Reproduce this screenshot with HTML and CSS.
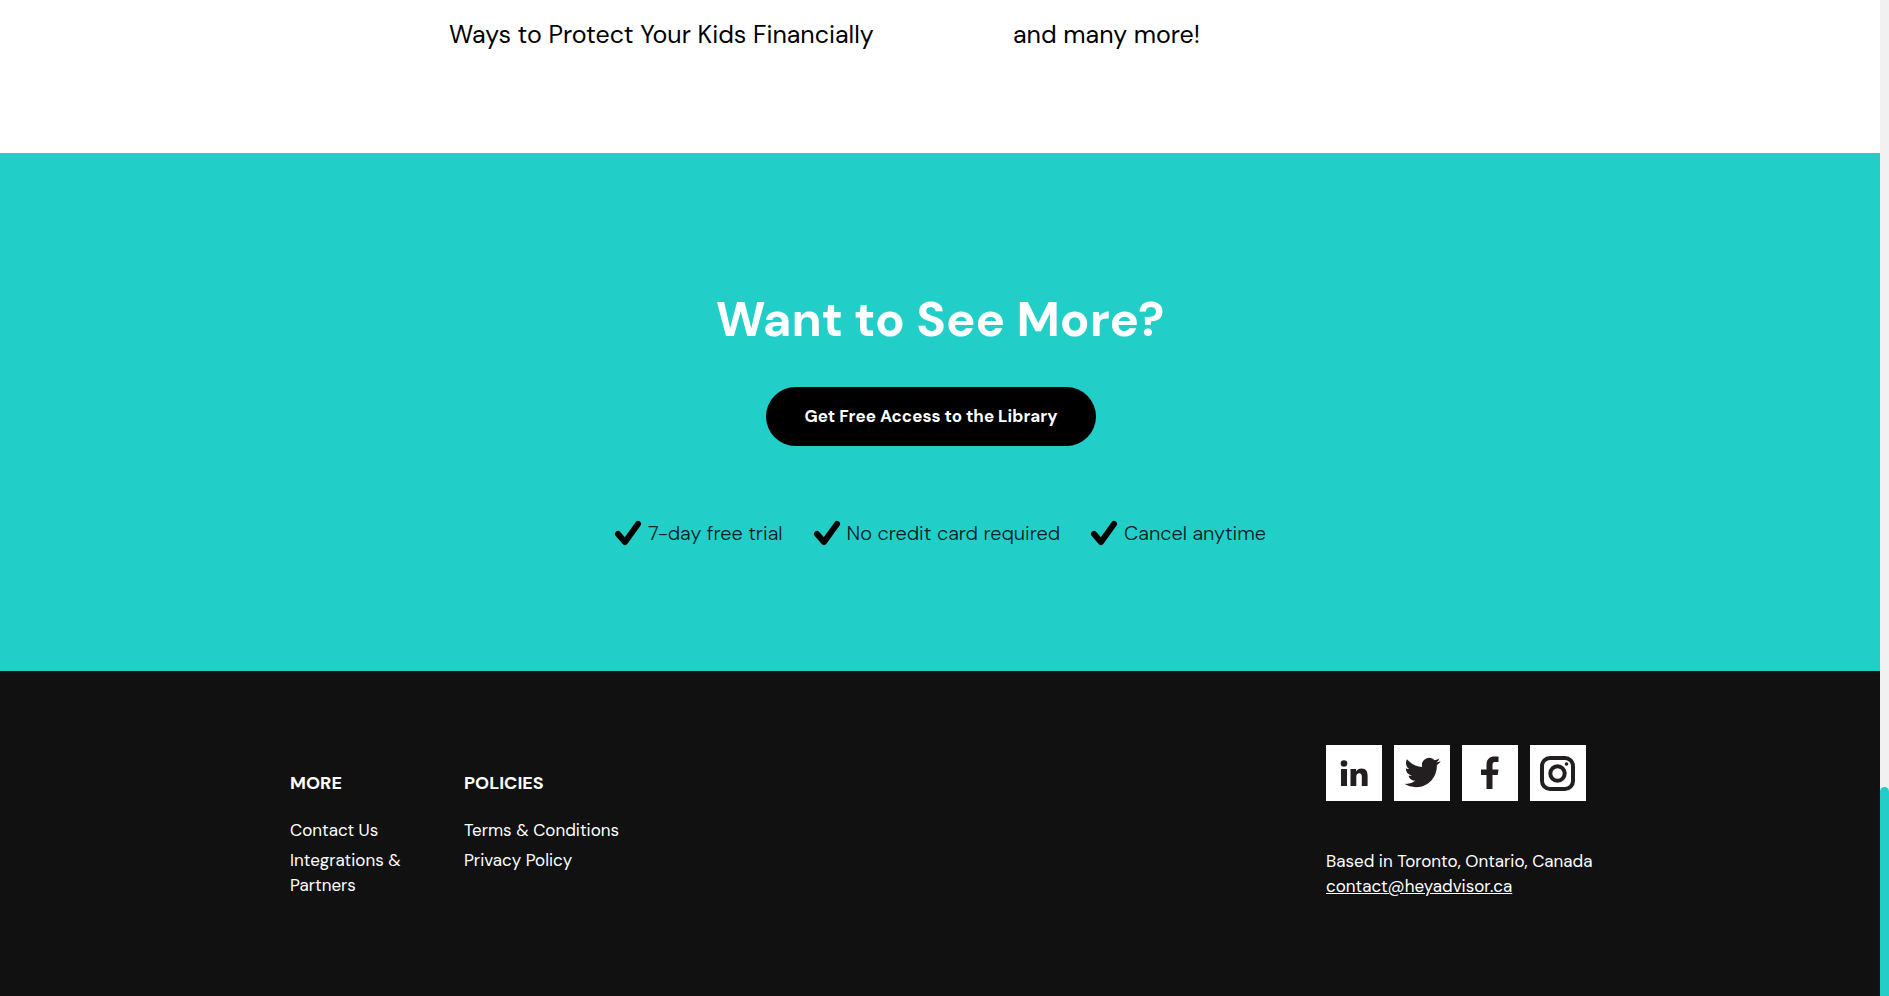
FILE: index.html
```html
<!DOCTYPE html>
<html lang="en">
<head>
  <meta charset="UTF-8" />
  <meta name="viewport" content="width=device-width, initial-scale=1" />
  <title>Hey Advisor</title>
  <link rel="stylesheet" href="styles.css">
</head>
<body>

<div class="page">
  <section class="topics">
    <ul class="topics-list">
      <li>Ways to Protect Your Kids Financially</li>
      <li>and many more!</li>
    </ul>
  </section>

  <section class="cta">
    <h2>Want to See More?</h2>
    <button type="button" class="cta-button">Get Free Access to the Library</button>
    <ul class="perks">
      <li>
        <svg viewBox="0 0 28 26" aria-hidden="true"><path d="M4 14l7 8L24 4" /></svg>
        <span>7-day free trial</span>
      </li>
      <li>
        <svg viewBox="0 0 28 26" aria-hidden="true"><path d="M4 14l7 8L24 4" /></svg>
        <span>No credit card required</span>
      </li>
      <li>
        <svg viewBox="0 0 28 26" aria-hidden="true"><path d="M4 14l7 8L24 4" /></svg>
        <span>Cancel anytime</span>
      </li>
    </ul>
  </section>

  <footer class="footer">
    <div class="footer-inner">
      <nav class="footer-links">
        <h3>MORE</h3>
        <a href="#contact">Contact Us</a>
        <a href="#partners">Integrations &amp; Partners</a>
      </nav>
      <nav class="footer-links">
        <h3>POLICIES</h3>
        <a href="#terms">Terms &amp; Conditions</a>
        <a href="#privacy">Privacy Policy</a>
      </nav>
      <div class="footer-contact">
        <div class="social">
          <a href="#linkedin" aria-label="LinkedIn">
            <svg viewBox="0 0 56 56">
              <circle cx="18" cy="18.500" r="3.300" />
              <path d="M15 24h6v17h-6zM24.500 24h5.600v2.400c1-1.700 2.900-2.900 5.500-2.900 4.300 0 6 2.800 6 7.200V41h-5.800v-9.200c0-2.200-.8-3.500-2.600-3.500-1.900 0-2.900 1.300-2.900 3.500V41h-5.800z" />
            </svg>
          </a>
          <a href="#twitter" aria-label="Twitter">
            <svg viewBox="0 0 56 56">
              <path transform="translate(10.500 9.500) scale(1.500)" d="M23.953 4.570a10 10 0 01-2.825.775 4.958 4.958 0 002.163-2.723c-.951.555-2.005.959-3.127 1.184a4.920 4.920 0 00-8.384 4.482C7.690 8.095 4.067 6.130 1.640 3.162a4.822 4.822 0 00-.666 2.475c0 1.710.87 3.213 2.188 4.096a4.904 4.904 0 01-2.228-.616v.06a4.923 4.923 0 003.946 4.827 4.996 4.996 0 01-2.212.085 4.936 4.936 0 004.604 3.417 9.867 9.867 0 01-6.102 2.105c-.39 0-.779-.023-1.170-.067a13.995 13.995 0 007.557 2.209c9.053 0 13.998-7.496 13.998-13.985 0-.21 0-.42-.015-.63A9.935 9.935 0 0024 4.590z" />
            </svg>
          </a>
          <a href="#facebook" aria-label="Facebook">
            <svg viewBox="0 0 56 56">
              <path d="M24.500 44V30H19v-5.500h5.500V20c0-5.500 3-8.500 8-8.500h4V17h-3c-2.300 0-3 1-3 3v4.500h6l-.8 5.500h-5.200v14z" />
            </svg>
          </a>
          <a href="#instagram" aria-label="Instagram">
            <svg viewBox="0 0 56 56" class="line">
              <rect x="12" y="13" width="31" height="31" rx="8" />
              <circle cx="27.500" cy="28.500" r="7.200" />
              <circle class="dot" cx="36.500" cy="19" r="1.800" />
            </svg>
          </a>
        </div>
        <p>Based in Toronto, Ontario, Canada</p>
        <a class="mail" href="mailto:contact@heyadvisor.ca">contact@heyadvisor.ca</a>
      </div>
    </div>
  </footer>
</div>

<div class="scroll-track">
  <div class="scroll-thumb"></div>
</div>

</body>
</html>
```
FILE: styles.css
```css
* {
  box-sizing: border-box;
}
body {
  font-family: "DM Sans", Inter, "Open Sans", sans-serif;
  margin: 0;
  min-height: 100vh;
  display: grid;
  grid-template-columns: 1fr 9px;
  background-color: #fff;
  color: #000;
}
ul {
  list-style: none;
  margin: 0;
  padding: 0;
}
h2, h3, p {
  margin: 0;
}
.page {
  display: flex;
  flex-direction: column;
}

.topics {
  padding: 17px 24px 100px;
}
.topics-list {
  display: grid;
  grid-template-columns: 564px 1fr;
  max-width: 982px;
  margin: 0 auto;
  font-size: 25px;
  line-height: 36px;
}

.cta {
  background-color: #22cfc8;
  display: flex;
  flex-direction: column;
  align-items: center;
  padding: 136px 24px 121px;
}
.cta h2 {
  color: #fff;
  font-size: 49px;
  line-height: 60px;
}
.cta-button {
  margin: 38px 18px 70px 0;
  padding: 0 38px 2px;
  height: 59px;
  border: 0;
  border-radius: 30px;
  background-color: #000;
  color: #fff;
  font-family: inherit;
  font-size: 17px;
  font-weight: 700;
  cursor: pointer;
}
.perks {
  display: flex;
  flex-wrap: wrap;
  gap: 30px;
  font-size: 20px;
  font-weight: 300;
  line-height: 34px;
  color: #04201f;
}
.perks li {
  display: flex;
  align-items: center;
  gap: 6px;
}
.perks svg {
  width: 28px;
  height: 26px;
  fill: none;
  stroke: #000;
  stroke-width: 6;
  stroke-linecap: round;
  stroke-linejoin: round;
}

.footer {
  flex: 1;
  background-color: #111;
  color: #fff;
  padding: 74px 24px 96px;
  font-size: 17px;
  line-height: 25px;
}
.footer-inner {
  display: grid;
  grid-template-columns: 124px 1fr 264px;
  column-gap: 50px;
  max-width: 1300px;
  margin: 0 auto;
}
.footer-links {
  display: flex;
  flex-direction: column;
  align-items: flex-start;
  gap: 5px;
  padding-top: 26px;
}
.footer-links h3 {
  font-size: 18px;
  line-height: 25px;
  margin-bottom: 17px;
}
.footer a {
  color: #fff;
  text-decoration: none;
}
.footer-contact {
  white-space: nowrap;
}
.social {
  display: flex;
  gap: 12px;
  margin-bottom: 48px;
}
.social a {
  width: 56px;
  height: 56px;
  background-color: #fff;
}
.social svg {
  display: block;
  fill: #231f20;
}
.social .line {
  fill: none;
  stroke: #231f20;
  stroke-width: 4;
}
.social .dot {
  fill: #231f20;
  stroke: none;
}
.footer .mail {
  text-decoration: underline;
}

.scroll-track {
  background-color: #f1f1f1;
  display: flex;
  flex-direction: column;
  justify-content: flex-end;
}
.scroll-thumb {
  height: 21%;
  background-color: #22cfc8;
  border-radius: 5px 5px 0 0;
}
```
